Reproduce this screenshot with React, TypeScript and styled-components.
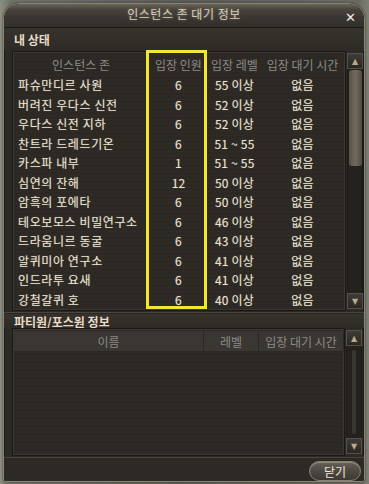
import React from "react";
import styled, { createGlobalStyle } from "styled-components";

const Global = createGlobalStyle`
  html, body { margin: 0; padding: 0; }
  body {
    width: 369px; height: 484px; overflow: hidden;
    background: linear-gradient(90deg, #8c8f80 0%, #6f7168 3%, #5b5d57 50%, #6a6a62 97%, #7d7f74 100%);
    font-family: "Noto Sans CJK KR", "Noto Sans", sans-serif;
  }
`;

const Window = styled.div`
  box-sizing: border-box;
  margin: 3px 0 0 3px;
  width: 362px;
  height: 479px;
  border: 1px solid #8b8376;
  border-radius: 16px 16px 3px 3px;
  background: #2d2a25;
  box-shadow: inset 0 0 0 1px #1a1815, 0 0 2px rgba(0,0,0,0.6);
  display: flex;
  flex-direction: column;
  overflow: hidden;
`;

const TitleBar = styled.div`
  position: relative;
  height: 23px;
  flex: none;
  display: flex;
  align-items: center;
  justify-content: center;
  background: linear-gradient(180deg, #6a6459 0%, #47423b 25%, #3a3631 60%, #322e2a 100%);
  border-bottom: 1px solid #1d1b18;
`;

const Title = styled.div`
  font-size: 12px;
  color: #d6ccb8;
  letter-spacing: 0.5px;
  text-shadow: 0 0 3px rgba(255, 240, 210, 0.35);
  margin-top: -4px;
`;

const CloseX = styled.div`
  position: absolute;
  right: 8px;
  top: 7px;
  font-size: 13px;
  line-height: 13px;
  color: #f2eee4;
  font-family: "DejaVu Sans", sans-serif;
`;

const SectionLabel = styled.div<{ $h: number }>`
  height: ${(p) => p.$h}px;
  flex: none;
  display: flex;
  align-items: center;
  padding-left: 10px;
  font-size: 12px;
  font-weight: 700;
  color: #e6dcc8;
  background: linear-gradient(180deg, #36322c, #2e2a25);
`;

const PanelRow = styled.div<{ $h: number }>`
  display: flex;
  height: ${(p) => p.$h}px;
  flex: none;
  padding: 0 4px 0 8px;
  gap: 1px;
`;

const Panel = styled.div`
  position: relative;
  flex: 1;
  box-sizing: border-box;
  border: 1px solid #1b1916;
  box-shadow: inset 0 0 0 1px #3b3732;
  background: repeating-linear-gradient(180deg, #2c2925 0px, #2c2925 3px, #2f2b27 3px, #2f2b27 4px);
  display: flex;
  flex-direction: column;
  padding: 2px 0 0 1px;
`;

const Grid = styled.div<{ $cols: string }>`
  display: grid;
  grid-template-columns: ${(p) => p.$cols};
`;

const HeadCell = styled.div<{ $shade?: boolean; $h: number }>`
  height: ${(p) => p.$h}px;
  display: flex;
  align-items: center;
  justify-content: center;
  font-size: 12px;
  color: #8d8a86;
  background: ${(p) => (p.$shade ? "#3a3632" : "transparent")};
  border-right: ${(p) => (p.$shade ? "1px solid #2a2724" : "none")};
  white-space: nowrap;
`;

const Cell = styled.div<{ $left?: boolean }>`
  height: 19.5px;
  display: flex;
  align-items: center;
  justify-content: ${(p) => (p.$left ? "flex-start" : "center")};
  padding-left: ${(p) => (p.$left ? "4px" : "0")};
  font-size: 12px;
  color: #ebe2cf;
  white-space: nowrap;
  letter-spacing: ${(p) => (p.$left ? "0.6px" : "0.2px")};
  text-shadow: 0 0 1px rgba(235, 226, 207, 0.4);
`;

const Highlight = styled.div`
  position: absolute;
  left: 133px;
  top: -2px;
  width: 61px;
  height: 259px;
  box-sizing: border-box;
  border: 3px solid #f4e630;
  pointer-events: none;
`;

const Scroll = styled.div`
  width: 16px;
  flex: none;
  display: flex;
  flex-direction: column;
  padding-top: 2px;
  padding-bottom: 2px;
`;

const ScrollBtn = styled.div`
  height: 16px;
  flex: none;
  box-sizing: border-box;
  border: 1px solid #55504a;
  background: linear-gradient(180deg, #3f3b35, #2a2723);
  display: flex;
  align-items: center;
  justify-content: center;
  font-size: 8px;
  color: #b9aa88;
  font-family: "DejaVu Sans", sans-serif;
`;

const Track = styled.div`
  flex: 1;
  display: flex;
  flex-direction: column;
  align-items: center;
  background: #24211e;
  border-left: 1px solid #1c1a17;
  border-right: 1px solid #1c1a17;
`;

const Thumb = styled.div<{ $h: number }>`
  width: 13px;
  height: ${(p) => p.$h}px;
  margin-top: 1px;
  border-radius: 3px;
  background: linear-gradient(90deg, #575146, #726a5c 50%, #514b42);
`;

const TrackLine = styled.div`
  width: 4px;
  flex: 1;
  margin: 4px 0;
  background: #3a3632;
  border-radius: 2px;
`;

const Divider = styled.div`
  height: 3px;
  flex: none;
  background: linear-gradient(180deg, #1c1a17, #4a453e 50%, #1c1a17);
`;

const Footer = styled.div`
  height: 24px;
  flex: none;
  display: flex;
  align-items: center;
  justify-content: flex-end;
  padding-right: 3px;
  background: #2d2a25;
`;

const Button = styled.div`
  width: 52px;
  height: 20px;
  box-sizing: border-box;
  border-radius: 10px;
  border: 1px solid #8a8272;
  background: linear-gradient(180deg, #67615a 0%, #4d4841 50%, #3d3934 100%);
  box-shadow: inset 0 1px 0 #8e877b;
  display: flex;
  align-items: center;
  justify-content: center;
  font-size: 12px;
  color: #eee6d6;
`;

const rows: [string, string, string][] = [
  ["파슈만디르 사원", "6", "55 이상"],
  ["버려진 우다스 신전", "6", "52 이상"],
  ["우다스 신전 지하", "6", "52 이상"],
  ["찬트라 드레드기온", "6", "51 ~ 55"],
  ["카스파 내부", "1", "51 ~ 55"],
  ["심연의 잔해", "12", "50 이상"],
  ["암흑의 포에타", "6", "50 이상"],
  ["테오보모스 비밀연구소", "6", "46 이상"],
  ["드라움니르 동굴", "6", "43 이상"],
  ["알퀴미아 연구소", "6", "41 이상"],
  ["인드라투 요새", "6", "41 이상"],
  ["강철갈퀴 호", "6", "40 이상"],
];

const topCols = "134px 61px 51px 85px";
const botCols = "190px 55px 85px";

export default function App() {
  return (
    <>
      <Global />
      <Window>
        <TitleBar>
          <Title>인스턴스 존 대기 정보</Title>
          <CloseX>✕</CloseX>
        </TitleBar>
        <SectionLabel $h={23}>내 상태</SectionLabel>
        <PanelRow $h={260}>
          <Panel>
            <Grid $cols={topCols}>
              <HeadCell $h={21}>인스턴스 존</HeadCell>
              <HeadCell $h={21}>입장 인원</HeadCell>
              <HeadCell $h={21}>입장 레벨</HeadCell>
              <HeadCell $h={21}>입장 대기 시간</HeadCell>
              {rows.map(([zone, n, lv]) => (
                <React.Fragment key={zone}>
                  <Cell $left>{zone}</Cell>
                  <Cell>{n}</Cell>
                  <Cell>{lv}</Cell>
                  <Cell>없음</Cell>
                </React.Fragment>
              ))}
            </Grid>
            <Highlight />
          </Panel>
          <Scroll>
            <ScrollBtn>▲</ScrollBtn>
            <Track>
              <Thumb $h={96} />
            </Track>
            <ScrollBtn>▼</ScrollBtn>
          </Scroll>
        </PanelRow>
        <Divider />
        <SectionLabel $h={14}>파티원/포스원 정보</SectionLabel>
        <PanelRow $h={128}>
          <Panel>
            <Grid $cols={botCols}>
              <HeadCell $h={20} $shade>이름</HeadCell>
              <HeadCell $h={20} $shade>레벨</HeadCell>
              <HeadCell $h={20} $shade>입장 대기 시간</HeadCell>
            </Grid>
          </Panel>
          <Scroll>
            <ScrollBtn>▲</ScrollBtn>
            <Track>
              <TrackLine />
            </Track>
            <ScrollBtn>▼</ScrollBtn>
          </Scroll>
        </PanelRow>
        <Divider />
        <Footer>
          <Button>닫기</Button>
        </Footer>
      </Window>
    </>
  );
}
